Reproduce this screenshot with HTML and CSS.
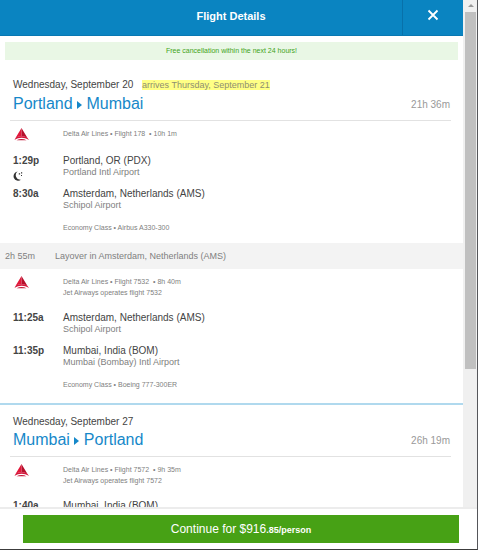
FILE: index.html
```html
<!DOCTYPE html>
<html lang="en">
<head>
<meta charset="utf-8">
<title>Flight Details</title>
<link rel="stylesheet" href="styles.css">
</head>
<body>
<svg class="defs" aria-hidden="true">
  <symbol id="delta" viewBox="0 0 16 13">
    <path fill="#e3173a" d="M7.5 0 1.8 9.6C4 8.6 5.700 8.200 7.500 8.200z"/>
    <path fill="#b5102c" d="M7.500 0 13.200 9.600C11 8.600 9.300 8.200 7.500 8.200z"/>
    <path fill="#d4163a" d="M1.800 9.400C5 8 10 8 13.200 9.400L15 12C10 9 5 9 .5 12z"/>
    <path fill="#c4183a" d="M2.500 12.200C5.500 10.600 9.500 10.600 12.500 12.200z"/>
  </symbol>
</svg>
<div class="dialog">
  <div class="viewport">
    <div class="pane">
      <header class="header">
        <h1 class="header-title">Flight Details</h1>
        <button class="close" type="button" aria-label="Close">
          <svg width="12" height="12" viewBox="0 0 12 12" fill="none" stroke="#fff" stroke-width="1.8"><path d="M1.5 1.5l9 9M10.5 1.5l-9 9"/></svg>
        </button>
      </header>
      <main class="scroll">
        <p class="notice">Free cancellation within the next 24 hours!</p>

        <section class="journey">
          <div class="journey-head">
            <p class="date">Wednesday, September 20 <mark class="arrives">arrives Thursday, September 21</mark></p>
            <div class="route">
              <h2 class="cities">Portland <svg class="arrow" viewBox="0 0 5 8"><path d="M0 0l5 4-5 4z"/></svg> Mumbai</h2>
              <span class="duration">21h 36m</span>
            </div>
          </div>
          <div class="segment">
            <div class="airline">
              <svg class="logo" role="img" aria-label="Delta"><use href="#delta"/></svg>
              <p>Delta Air Lines • Flight 178 &nbsp;• 10h 1m</p>
            </div>
            <div class="stop">
              <div class="time">1:29p
                <svg class="moon" viewBox="0 0 10 10"><path d="M4.6 .6A4.600 4.600 0 1 0 8 8.800 4.600 4.600 0 0 1 4.600 .6zM5.800 2.200h1.300v1.300H5.800zM8 1.300h1.200v1.200H8zM8 4h1v1H8z"/></svg>
              </div>
              <div><p class="place">Portland, OR (PDX)</p><p class="airport">Portland Intl Airport</p></div>
            </div>
            <div class="stop">
              <div class="time">8:30a</div>
              <div><p class="place">Amsterdam, Netherlands (AMS)</p><p class="airport">Schipol Airport</p></div>
            </div>
            <p class="cabin">Economy Class • Airbus A330-300</p>
          </div>
          <div class="layover"><span>2h 55m</span><span>Layover in Amsterdam, Netherlands (AMS)</span></div>
          <div class="segment">
            <div class="airline">
              <svg class="logo" role="img" aria-label="Delta"><use href="#delta"/></svg>
              <p>Delta Air Lines • Flight 7532 &nbsp;• 8h 40m<br>Jet Airways operates flight 7532</p>
            </div>
            <div class="stop">
              <div class="time">11:25a</div>
              <div><p class="place">Amsterdam, Netherlands (AMS)</p><p class="airport">Schipol Airport</p></div>
            </div>
            <div class="stop">
              <div class="time">11:35p</div>
              <div><p class="place">Mumbai, India (BOM)</p><p class="airport">Mumbai (Bombay) Intl Airport</p></div>
            </div>
            <p class="cabin">Economy Class • Boeing 777-300ER</p>
          </div>
        </section>

        <section class="journey">
          <div class="journey-head">
            <p class="date">Wednesday, September 27</p>
            <div class="route">
              <h2 class="cities">Mumbai <svg class="arrow" viewBox="0 0 5 8"><path d="M0 0l5 4-5 4z"/></svg> Portland</h2>
              <span class="duration">26h 19m</span>
            </div>
          </div>
          <div class="segment">
            <div class="airline">
              <svg class="logo" role="img" aria-label="Delta"><use href="#delta"/></svg>
              <p>Delta Air Lines • Flight 7572 &nbsp;• 9h 35m<br>Jet Airways operates flight 7572</p>
            </div>
            <div class="stop">
              <div class="time">1:40a</div>
              <div><p class="place">Mumbai, India (BOM)</p></div>
            </div>
          </div>
        </section>
      </main>
    </div>
    <div class="scrollbar" aria-hidden="true">
      <svg class="scroll-up" viewBox="0 0 6 3"><path d="M0 3l3-3 3 3z"/></svg>
      <div class="thumb"></div>
    </div>
  </div>
  <footer class="footer">
    <button class="continue" type="button">Continue for $916<small>.85/person</small></button>
  </footer>
</div>
</body>
</html>
```

FILE: styles.css
```css
* { box-sizing: border-box; }
body, p, h1, h2 { margin: 0; }
body {
  font-family: "Liberation Sans", Arial, sans-serif;
  color: #444;
  background: #fff;
}
.defs { position: absolute; width: 0; height: 0; }

.dialog {
  display: flex;
  flex-direction: column;
  height: 100vh;
  border-right: 1px solid #55565a;
  border-bottom: 1px solid #3c3c3c;
}
.viewport { flex: 1; min-height: 0; display: flex; }
.pane { flex: 1; min-width: 0; display: flex; flex-direction: column; }

.header {
  display: flex;
  flex: none;
  height: 36px;
  background: #0a84c1;
  border-bottom: 1px solid #0878b2;
  color: #fff;
}
.header-title {
  flex: 1;
  padding-left: 60px;
  font-size: 11px;
  line-height: 32px;
  text-align: center;
}
.close {
  width: 61px;
  padding: 0 0 5px;
  border: 0;
  border-left: 1px solid #0871aa;
  background: none;
  display: flex;
  align-items: center;
  justify-content: center;
}

.scroll { flex: 1; min-height: 0; overflow-y: auto; scrollbar-width: none; }
.notice {
  margin: 6px 5px 8px;
  background: #e9f7e5;
  color: #3fa31a;
  font-size: 7px;
  line-height: 18px;
  text-align: center;
}

.journey { padding: 9px 0 3px; }
.journey + .journey { border-top: 2px solid #b0d9ee; }
.journey-head {
  margin: 0 12px 0 10px;
  padding: 0 1px 5px 3px;
  border-bottom: 1px solid #e2e2e2;
}
.date { font-size: 10px; line-height: 15px; }
.arrives {
  margin-left: 6px;
  background: #ffff85;
  color: #8f8f70;
  font-size: 9px;
}
.route { display: flex; justify-content: space-between; align-items: center; }
.cities { font-size: 16px; font-weight: 400; line-height: 22px; color: #1688c9; }
.arrow { width: 5px; height: 8px; fill: #1688c9; }
.duration { color: #999; font-size: 10px; }

.segment { padding: 7px 13px 10px; }
.airline {
  display: grid;
  grid-template-columns: 50px 1fr;
  min-height: 13px;
  margin-bottom: 13px;
  color: #808080;
  font-size: 7px;
  line-height: 11px;
}
.logo { width: 16px; height: 13px; margin-left: 1px; }
.stop { display: grid; grid-template-columns: 50px 1fr; height: 24px; margin-bottom: 9px; }
.time { font-size: 10px; font-weight: 700; line-height: 13px; }
.moon { display: block; width: 10px; height: 10px; margin-top: 4px; fill: #333; }
.place { font-size: 10px; line-height: 13px; }
.airport { font-size: 9px; line-height: 11px; color: #808080; }
.cabin { padding: 2px 0 0 50px; font-size: 7px; line-height: 11px; color: #808080; }
.layover {
  display: grid;
  grid-template-columns: 50px 1fr;
  padding-left: 5px;
  background: #f3f3f3;
  color: #808080;
  font-size: 9px;
  line-height: 26px;
}

.scrollbar {
  flex: none;
  width: 14px;
  padding: 4px 1px 0 2px;
  background: #f0f0f0;
}
.scroll-up { display: block; width: 6px; height: 3px; margin: 0 auto 5px; fill: #999; }
.thumb { height: 71%; background: #c0c0c0; }

.footer {
  flex: none;
  padding: 6px 18px 6px 23px;
  border-top: 2px solid #ececec;
}
.continue {
  display: block;
  width: 100%;
  padding: 0;
  border: 0;
  background: #47a115;
  color: #fff;
  font-family: inherit;
  font-size: 12px;
  line-height: 28px;
}
.continue small { font-size: 9px; font-weight: 700; line-height: 1; }
```
